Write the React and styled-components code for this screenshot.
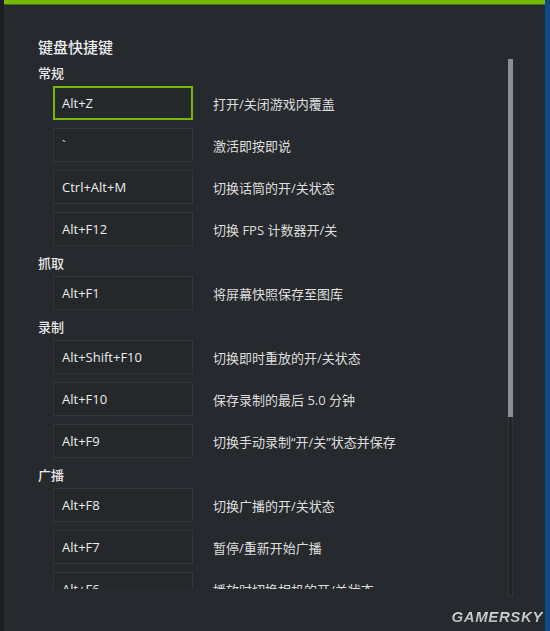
import styled, { createGlobalStyle } from "styled-components";

const GlobalStyle = createGlobalStyle`
  html, body {
    margin: 0;
    padding: 0;
    background: #1c1e21;
  }
  * {
    box-sizing: border-box;
  }
`;

const Frame = styled.div`
  position: relative;
  width: 550px;
  height: 631px;
  display: flex;
  overflow: hidden;
  font-family: "Open Sans", "Noto Sans CJK SC", sans-serif;
`;

const Edge = styled.div`
  flex: 0 0 ${(p) => p.$w}px;
  background: ${(p) => p.$color};
`;

const Panel = styled.div`
  flex: 1;
  display: flex;
  flex-direction: column;
  background: #26292d;
`;

const TopBar = styled.div`
  height: 5px;
  background: #76b900;
  border-bottom: 1px solid #486e14;
`;

const Inner = styled.div`
  padding: 32px 32px 0 34px;
  display: flex;
  flex-direction: column;
`;

const Title = styled.h1`
  margin: 0;
  font-family: "Noto Sans CJK SC", sans-serif;
  font-size: 15px;
  line-height: 20px;
  font-weight: 500;
  color: #ededed;
`;

const Body = styled.div`
  display: flex;
`;

const Scroller = styled.div`
  flex: 1;
  height: 532px;
  overflow: hidden;
  padding-top: 7px;
  display: flex;
  flex-direction: column;
  gap: 8px;
`;

const Track = styled.div`
  flex: 0 0 5px;
  height: 538px;
  margin-top: 2px;
  background: #222528;
  border: 1px solid #31353a;
  display: flex;
  flex-direction: column;
`;

const Thumb = styled.div`
  height: 358px;
  margin: -1px;
  background: #8b8e92;
`;

const Section = styled.section`
  display: flex;
  flex-direction: column;
`;

const SectionTitle = styled.h2`
  margin: 0 0 4px;
  font-family: "Noto Sans CJK SC", sans-serif;
  font-size: 13px;
  line-height: 18px;
  font-weight: 500;
  color: #e8e8e8;
`;

const Rows = styled.div`
  display: flex;
  flex-direction: column;
  gap: 8px;
  padding-left: 15px;
`;

const Row = styled.div`
  display: flex;
  align-items: center;
`;

const Key = styled.div`
  flex: 0 0 140px;
  height: 34px;
  display: flex;
  align-items: center;
  padding-left: ${(p) => (p.$active ? 7 : 8)}px;
  border: ${(p) => (p.$active ? "2px solid #76b900" : "1px solid #33373c")};
  background: #25282b;
  font-size: 13px;
  color: #ececec;
  white-space: nowrap;
`;

const Desc = styled.div`
  margin-left: 20px;
  font-family: "Open Sans", "Noto Sans CJK SC", sans-serif;
  font-size: 13px;
  color: #dedede;
  white-space: nowrap;
`;

const Watermark = styled.div`
  position: absolute;
  right: 7px;
  bottom: 6px;
  font-family: "Liberation Sans", sans-serif;
  font-weight: 700;
  font-style: italic;
  font-size: 15px;
  letter-spacing: 0.6px;
  background: linear-gradient(#e8e8e8, #a9abae);
  -webkit-background-clip: text;
  background-clip: text;
  color: transparent;
`;

const sections = [
  {
    name: "常规",
    rows: [
      ["Alt+Z", "打开/关闭游戏内覆盖", true],
      ["`", "激活即按即说"],
      ["Ctrl+Alt+M", "切换话筒的开/关状态"],
      ["Alt+F12", "切换 FPS 计数器开/关"],
    ],
  },
  {
    name: "抓取",
    rows: [["Alt+F1", "将屏幕快照保存至图库"]],
  },
  {
    name: "录制",
    rows: [
      ["Alt+Shift+F10", "切换即时重放的开/关状态"],
      ["Alt+F10", "保存录制的最后 5.0 分钟"],
      ["Alt+F9", "切换手动录制“开/关”状态并保存"],
    ],
  },
  {
    name: "广播",
    rows: [
      ["Alt+F8", "切换广播的开/关状态"],
      ["Alt+F7", "暂停/重新开始广播"],
      ["Alt+F6", "播放时切换相机的开/关状态"],
    ],
  },
];

export default function App() {
  return (
    <>
      <GlobalStyle />
      <Frame>
        <Edge $w={4} $color="#1c1e21" />
        <Panel>
          <TopBar />
          <Inner>
            <Title>键盘快捷键</Title>
            <Body>
              <Scroller>
                {sections.map((s) => (
                  <Section key={s.name}>
                    <SectionTitle>{s.name}</SectionTitle>
                    <Rows>
                      {s.rows.map(([key, desc, active]) => (
                        <Row key={key}>
                          <Key $active={active}>{key}</Key>
                          <Desc>{desc}</Desc>
                        </Row>
                      ))}
                    </Rows>
                  </Section>
                ))}
              </Scroller>
              <Track>
                <Thumb />
              </Track>
            </Body>
          </Inner>
        </Panel>
        <Edge $w={5} $color="#0c4a8b" />
        <Watermark>GAMERSKY</Watermark>
      </Frame>
    </>
  );
}
